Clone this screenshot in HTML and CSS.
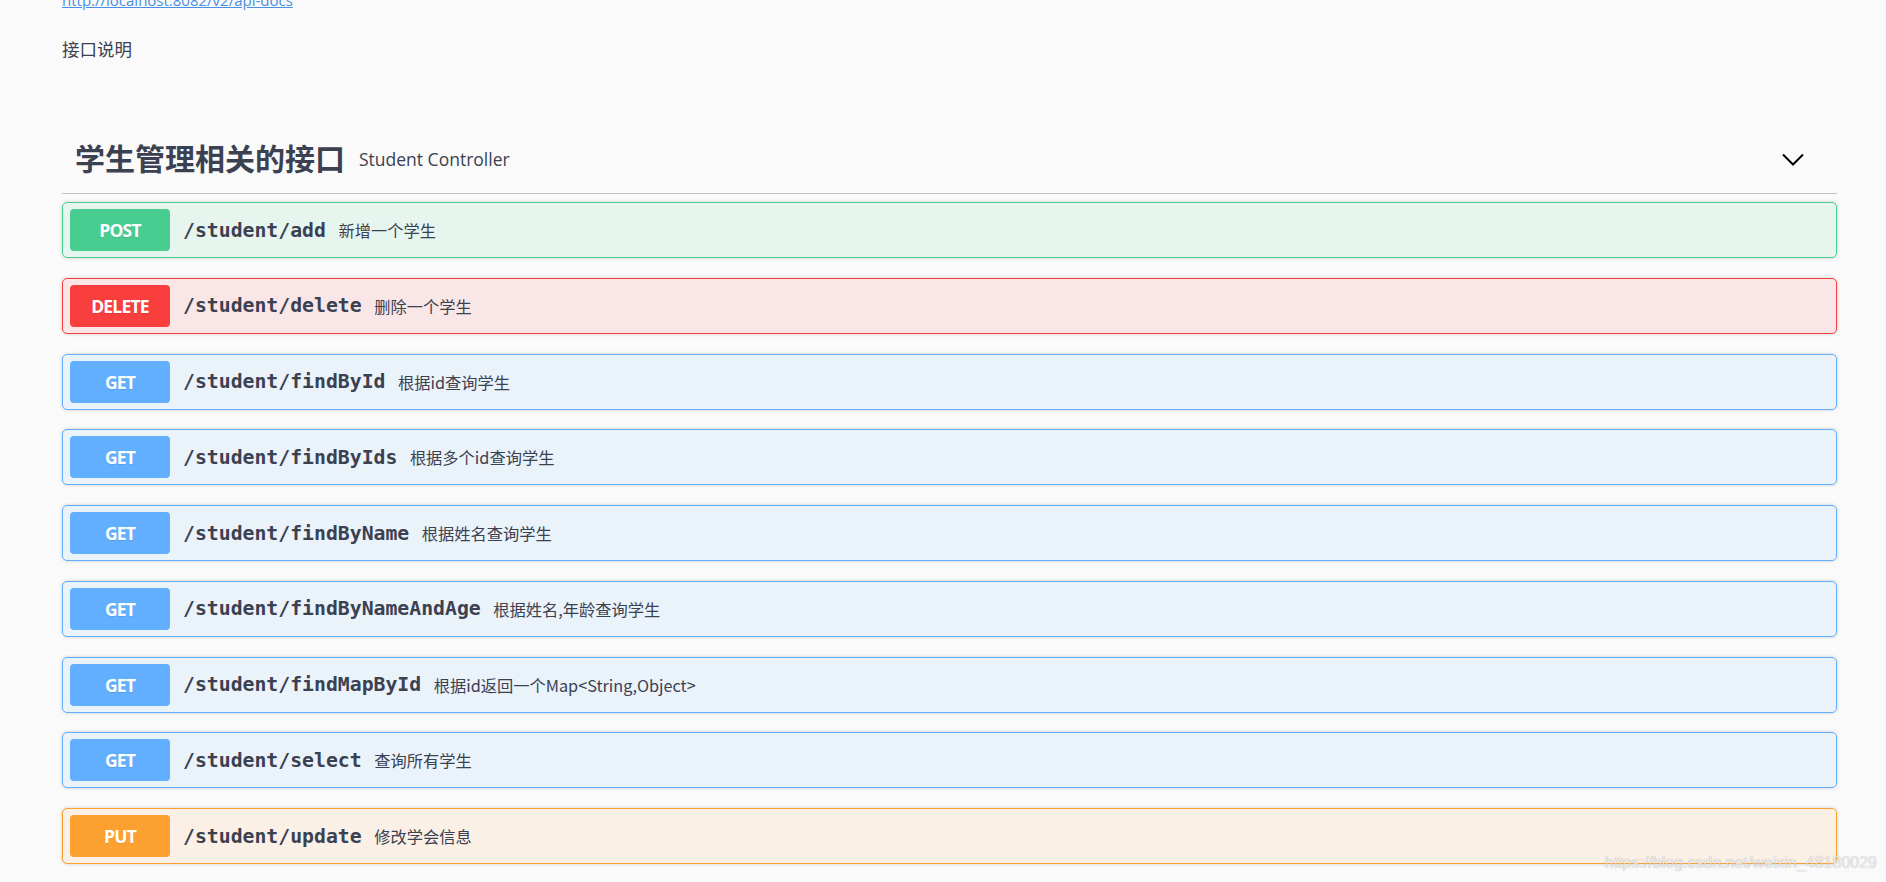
FILE: index.html
```html
<!DOCTYPE html>
<html lang="zh-CN">
<head>
<meta charset="utf-8">
<title>Swagger UI</title>
<link rel="stylesheet" href="styles.css">
</head>
<body>
<div class="page">
  <div class="info">
    <a class="doc-link" href="#">http://localhost:8082/v2/api-docs</a>
    <p class="info-desc">接口说明</p>
  </div>

  <div class="tag-section">
    <div class="tag-header">
      <span class="tag-title">学生管理相关的接口</span>
      <span class="tag-sub">Student Controller</span>
      <span class="tag-arrow">
        <svg width="22" height="13" viewBox="0 0 22 13"><polyline points="1,1.5 11,11.5 21,1.5" fill="none" stroke="#000" stroke-width="2"/></svg>
      </span>
    </div>

    <div class="opblock post"><span class="method">POST</span><span class="path">/student/add</span><span class="desc">新增一个学生</span></div>
    <div class="opblock delete"><span class="method">DELETE</span><span class="path">/student/delete</span><span class="desc">删除一个学生</span></div>
    <div class="opblock get"><span class="method">GET</span><span class="path">/student/findById</span><span class="desc">根据id查询学生</span></div>
    <div class="opblock get"><span class="method">GET</span><span class="path">/student/findByIds</span><span class="desc">根据多个id查询学生</span></div>
    <div class="opblock get"><span class="method">GET</span><span class="path">/student/findByName</span><span class="desc">根据姓名查询学生</span></div>
    <div class="opblock get"><span class="method">GET</span><span class="path">/student/findByNameAndAge</span><span class="desc">根据姓名,年龄查询学生</span></div>
    <div class="opblock get"><span class="method">GET</span><span class="path">/student/findMapById</span><span class="desc">根据id返回一个Map&lt;String,Object&gt;</span></div>
    <div class="opblock get"><span class="method">GET</span><span class="path">/student/select</span><span class="desc">查询所有学生</span></div>
    <div class="opblock put"><span class="method">PUT</span><span class="path">/student/update</span><span class="desc">修改学会信息</span></div>
  </div>
</div>
<div class="watermark">https://blog.csdn.net/weixin_48180029</div>
</body>
</html>
```

FILE: styles.css
```css
html {
  overflow: hidden;
}

body {
  margin: 0;
  background: #fafafa;
  color: #3b4151;
  font-family: "Open Sans", "Noto Sans CJK SC", sans-serif;
}

.page {
  padding: 0 49px 0 62px;
}

.info {
  display: flex;
  flex-direction: column;
  align-items: flex-start;
}

.doc-link {
  margin-top: -10px;
  font-family: "Open Sans", sans-serif;
  font-size: 15px;
  line-height: 20px;
  color: #4990e2;
  text-decoration: underline;
}

.info-desc {
  margin: 27px 0 0;
  font-family: "Noto Sans CJK SC", sans-serif;
  font-size: 17.5px;
  line-height: 24px;
  color: #3b4151;
}

.tag-section {
  margin-top: 67px;
}

.tag-header {
  display: flex;
  align-items: center;
  height: 40px;
  padding: 11px 33px 14px 13px;
  border-bottom: 1px solid rgba(59, 65, 81, 0.3);
  margin-bottom: 8px;
}

.tag-title {
  margin-bottom: 4px;
  font-family: "Noto Sans CJK SC", sans-serif;
  font-size: 30px;
  font-weight: 700;
  line-height: 40px;
  color: #3b4151;
}

.tag-sub {
  flex: 1;
  margin-left: 14px;
  font-family: "Open Sans", sans-serif;
  font-size: 17.5px;
  color: #3b4151;
}

.tag-arrow {
  display: flex;
  align-items: center;
}

.opblock {
  display: flex;
  align-items: center;
  height: 42px;
  padding: 6px 7px;
  margin-bottom: 19.75px;
  border: 1px solid;
  border-radius: 5px;
  box-shadow: 0 0 3.75px rgba(0, 0, 0, 0.19);
}

.method {
  display: flex;
  align-items: center;
  justify-content: center;
  width: 100px;
  height: 42px;
  flex-shrink: 0;
  border-radius: 4px;
  color: #fff;
  font-family: "Open Sans", sans-serif;
  font-size: 17.5px;
  font-weight: 700;
  letter-spacing: -0.8px;
  text-shadow: 0 1px 0 rgba(0, 0, 0, 0.1);
}

.path {
  padding: 0 12.5px 0 13px;
  font-family: "DejaVu Sans Mono", monospace;
  font-size: 19.8px;
  font-weight: 700;
  color: #3b4151;
}

.desc {
  font-family: "Noto Sans CJK SC", sans-serif;
  font-size: 16.25px;
  color: #3b4151;
}

.post {
  border-color: #49cc90;
  background: rgba(73, 204, 144, 0.1);
}
.post .method { background: #49cc90; }

.delete {
  border-color: #f93e3e;
  background: rgba(249, 62, 62, 0.1);
}
.delete .method { background: #f93e3e; }

.get {
  border-color: #61affe;
  background: rgba(97, 175, 254, 0.1);
}
.get .method { background: #61affe; }

.put {
  border-color: #fca130;
  background: rgba(252, 161, 48, 0.1);
}
.put .method { background: #fca130; }

.watermark {
  position: absolute;
  right: 9px;
  bottom: 10px;
  font-family: "Liberation Sans", Arial, sans-serif;
  font-size: 16px;
  line-height: 18px;
  color: rgba(255, 255, 255, 0.75);
  text-shadow: 0 0 1px rgba(0, 0, 0, 0.35);
}
```
